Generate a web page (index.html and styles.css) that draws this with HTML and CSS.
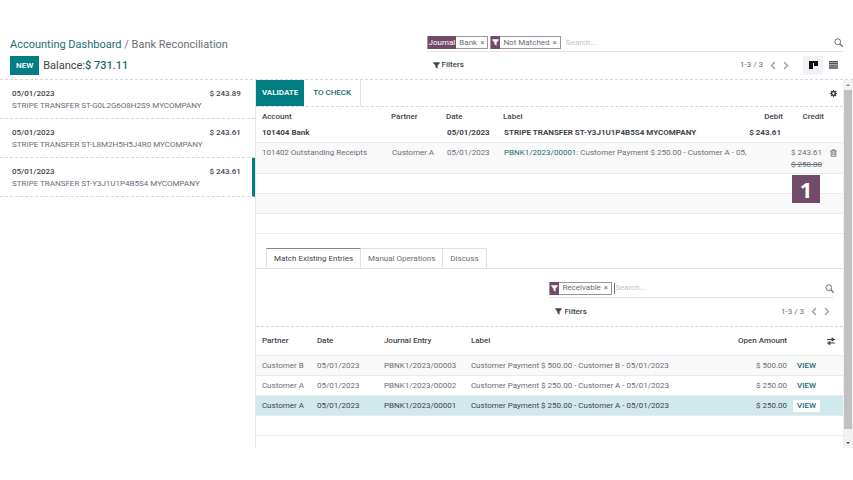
FILE: index.html
```html
<!DOCTYPE html>
<html lang="en">

<head>
  <meta charset="UTF-8">
  <meta name="viewport" content="width=device-width, initial-scale=1">
  <title>Bank Reconciliation</title>
  <link rel="stylesheet" href="styles.css">
</head>

<body>
  <!-- shared icons -->
  <svg class="sprite" aria-hidden="true">
    <symbol id="funnel" viewBox="0 0 12 12">
      <path d="M0.5 0.5h11v1.6L7.8 6v5.5L4.2 9V6L0.5 2.100z" />
    </symbol>
    <symbol id="search" viewBox="0 0 12 12">
      <circle cx="5" cy="5" r="3.900" fill="none" stroke="currentColor" stroke-width="1.300" />
      <path d="M8 8l3.500 3.500" stroke="currentColor" stroke-width="1.700" />
    </symbol>
    <symbol id="prev" viewBox="0 0 8 12">
      <path d="M6.500 1.500L2 6l4.500 4.500" fill="none" stroke="currentColor" stroke-width="2" />
    </symbol>
    <symbol id="next" viewBox="0 0 8 12">
      <path d="M1.500 1.500L6 6l-4.500 4.500" fill="none" stroke="currentColor" stroke-width="2" />
    </symbol>
  </svg>

  <header class="control-panel">
    <div class="panel-left">
      <nav class="breadcrumb">
        <a href="#">Accounting Dashboard</a>
        <span>/</span>
        <span>Bank Reconciliation</span>
      </nav>
      <div class="actions">
        <button class="btn-new">NEW</button>
        <span class="balance">Balance:<b>$ 731.11</b></span>
      </div>
    </div>
    <div class="panel-right">
      <div class="search-bar">
        <span class="facet"><span class="facet-label">Journal</span><span class="facet-value">Bank</span><button
            class="facet-remove" aria-label="Remove Bank">×</button></span>
        <span class="facet"><span class="facet-label"><svg class="ico-funnel"><use href="#funnel" /></svg></span><span
            class="facet-value">Not Matched</span><button class="facet-remove"
            aria-label="Remove Not Matched">×</button></span>
        <input class="search-input" type="text" placeholder="Search..." aria-label="Search">
        <button class="icon-btn" aria-label="Search"><svg class="ico-search"><use href="#search" /></svg></button>
      </div>
      <div class="tools">
        <button class="filters"><svg class="ico-funnel"><use href="#funnel" /></svg>Filters</button>
        <div class="pager">
          <span>1-3 / 3</span>
          <button class="icon-btn" aria-label="Previous"><svg class="ico-arrow"><use href="#prev" /></svg></button>
          <button class="icon-btn" aria-label="Next"><svg class="ico-arrow"><use href="#next" /></svg></button>
        </div>
        <div class="views">
          <button class="view active" aria-label="Kanban view"><svg class="ico-kanban" viewBox="0 0 9 8">
              <path d="M0 0h9v2H0zM0 2h4v6H0zM5 2h4v3H5z" />
            </svg></button>
          <button class="view" aria-label="List view"><svg class="ico-list" viewBox="0 0 9 8">
              <path d="M0 0h9v1.500H0zM0 2.100h9v1.500H0zM0 4.200h9v1.500H0zM0 6.300h9v1.500H0z" />
            </svg></button>
        </div>
      </div>
    </div>
  </header>

  <main class="content">
    <section class="statements">
      <article class="statement">
        <div class="statement-head"><span>05/01/2023</span><span>$ 243.89</span></div>
        <p>STRIPE TRANSFER ST-G0L2G6O8H2S9 MYCOMPANY</p>
      </article>
      <article class="statement">
        <div class="statement-head"><span>05/01/2023</span><span>$ 243.61</span></div>
        <p>STRIPE TRANSFER ST-L8M2H5H5J4R0 MYCOMPANY</p>
      </article>
      <article class="statement selected">
        <div class="statement-head"><span>05/01/2023</span><span>$ 243.61</span></div>
        <p>STRIPE TRANSFER ST-Y3J1U1P4B5S4 MYCOMPANY</p>
      </article>
    </section>

    <section class="reconcile">
      <div class="status-bar">
        <button class="btn-validate">VALIDATE</button>
        <button class="btn-check">TO CHECK</button>
        <button class="icon-btn gear" aria-label="Settings"><svg class="ico-gear" viewBox="0 0 14 14">
            <circle cx="7" cy="7" r="3.800" fill="none" stroke="currentColor" stroke-width="3" />
            <path d="M7 0v3M7 11v3M0 7h3M11 7h3M2 2l2.200 2.200M9.800 9.800L12 12M12 2L9.800 4.200M4.200 9.800L2 12"
              stroke="currentColor" stroke-width="2.400" />
          </svg></button>
      </div>

      <table class="lines">
        <colgroup>
          <col class="c-account">
          <col class="c-partner">
          <col class="c-date">
          <col>
          <col class="c-debit">
          <col class="c-credit">
          <col class="c-trash">
        </colgroup>
        <thead>
          <tr>
            <th>Account</th>
            <th>Partner</th>
            <th>Date</th>
            <th>Label</th>
            <th class="num">Debit</th>
            <th class="num">Credit</th>
            <th></th>
          </tr>
        </thead>
        <tbody>
          <tr class="bank">
            <td>101404 Bank</td>
            <td></td>
            <td>05/01/2023</td>
            <td>STRIPE TRANSFER ST-Y3J1U1P4B5S4 MYCOMPANY</td>
            <td class="num">$ 243.61</td>
            <td></td>
            <td></td>
          </tr>
          <tr class="odd counterpart">
            <td>101402 Outstanding Receipts</td>
            <td>Customer A</td>
            <td>05/01/2023</td>
            <td><a href="#">PBNK1/2023/00001</a>: Customer Payment $ 250.00 - Customer A - 05,</td>
            <td></td>
            <td class="num credit">$ 243.61<s>$ 250.00</s><span class="step">1</span></td>
            <td class="trash"><button class="icon-btn" aria-label="Delete"><svg class="ico-trash" viewBox="0 0 12 13">
                  <path d="M0.500 3h11M4 3V1h4v2M2 3v9h8V3M4.700 5v5M7.300 5v5" fill="none" stroke="currentColor"
                    stroke-width="1.500" />
                </svg></button></td>
          </tr>
          <tr class="empty">
            <td colspan="7"></td>
          </tr>
          <tr class="empty odd">
            <td colspan="7"></td>
          </tr>
          <tr class="empty">
            <td colspan="7"></td>
          </tr>
        </tbody>
      </table>

      <nav class="tabs">
        <button class="tab active">Match Existing Entries</button>
        <button class="tab">Manual Operations</button>
        <button class="tab">Discuss</button>
      </nav>

      <div class="entries-panel">
        <div class="search-bar">
          <span class="facet"><span class="facet-label"><svg class="ico-funnel"><use href="#funnel" /></svg></span><span
              class="facet-value">Receivable</span><button class="facet-remove"
              aria-label="Remove Receivable">×</button></span>
          <input class="search-input focused" type="text" placeholder="Search..." aria-label="Search entries">
          <button class="icon-btn" aria-label="Search"><svg class="ico-search"><use href="#search" /></svg></button>
        </div>
        <div class="tools">
          <button class="filters"><svg class="ico-funnel"><use href="#funnel" /></svg>Filters</button>
          <div class="pager">
            <span>1-3 / 3</span>
            <button class="icon-btn" aria-label="Previous"><svg class="ico-arrow"><use href="#prev" /></svg></button>
            <button class="icon-btn" aria-label="Next"><svg class="ico-arrow"><use href="#next" /></svg></button>
          </div>
        </div>
      </div>

      <table class="entries">
        <colgroup>
          <col class="e-partner">
          <col class="e-date">
          <col class="e-journal">
          <col>
          <col class="e-amount">
          <col class="e-view">
        </colgroup>
        <thead>
          <tr>
            <th>Partner</th>
            <th>Date</th>
            <th>Journal Entry</th>
            <th>Label</th>
            <th class="num">Open Amount</th>
            <th class="options"><button class="icon-btn" aria-label="Columns"><svg class="ico-sliders"
                  viewBox="0 0 8 8">
                  <path d="M0 2.500h8M0 6h8" stroke="currentColor" stroke-width="1" />
                  <path d="M4.500 0.800h2v3.400h-2zM1.500 4.300h2v3.400h-2z" />
                </svg></button></th>
          </tr>
        </thead>
        <tbody>
          <tr class="odd">
            <td>Customer B</td>
            <td>05/01/2023</td>
            <td>PBNK1/2023/00003</td>
            <td>Customer Payment $ 500.00 - Customer B - 05/01/2023</td>
            <td class="num">$ 500.00</td>
            <td class="view-cell"><button class="btn-view">VIEW</button></td>
          </tr>
          <tr>
            <td>Customer A</td>
            <td>05/01/2023</td>
            <td>PBNK1/2023/00002</td>
            <td>Customer Payment $ 250.00 - Customer A - 05/01/2023</td>
            <td class="num">$ 250.00</td>
            <td class="view-cell"><button class="btn-view">VIEW</button></td>
          </tr>
          <tr class="picked">
            <td>Customer A</td>
            <td>05/01/2023</td>
            <td>PBNK1/2023/00001</td>
            <td>Customer Payment $ 250.00 - Customer A - 05/01/2023</td>
            <td class="num">$ 250.00</td>
            <td class="view-cell"><button class="btn-view">VIEW</button></td>
          </tr>
          <tr>
            <td colspan="6"></td>
          </tr>
        </tbody>
      </table>
    </section>

    <div class="scrollbar" aria-hidden="true">
      <span class="arrow up"></span>
      <span class="thumb"></span>
      <span class="arrow down"></span>
    </div>
  </main>
</body>

</html>
```

FILE: styles.css
```css
* {
  box-sizing: border-box;
}

body {
  margin: 0;
  padding: 32px 0;
  min-height: 100vh;
  display: flex;
  flex-direction: column;
  background: #fff;
  color: #6a6e76;
  font: 8px/12px Roboto, "Open Sans", sans-serif;
}

a {
  color: #1a6d72;
  text-decoration: none;
}

p {
  margin: 0;
}

button,
input {
  font: inherit;
  color: inherit;
  background: none;
  border: 0;
  border-radius: 0;
  padding: 0;
  margin: 0;
}

svg {
  display: block;
  fill: currentColor;
}

.sprite {
  position: absolute;
  width: 0;
  height: 0;
}

.ico-funnel {
  width: 7px;
  height: 7px;
}

.ico-search {
  width: 9px;
  height: 9px;
}

.ico-arrow {
  width: 6px;
  height: 9px;
}

.ico-kanban,
.ico-list {
  width: 9px;
  height: 8px;
}

.ico-gear {
  width: 7px;
  height: 7px;
}

.ico-trash {
  width: 7px;
  height: 8px;
}

.ico-sliders {
  width: 8px;
  height: 8px;
}

/* top bar */
.control-panel {
  display: grid;
  grid-template-columns: 1fr 1fr;
  padding: 0 10px;
  height: 48px;
  border-bottom: 1px dashed #d5d8db;
}

.control-panel,
.content {
  width: 100%;
}

.breadcrumb {
  padding-top: 5px;
  font-size: 11px;
  line-height: 16px;
}

.actions {
  display: flex;
  align-items: center;
  gap: 4px;
  padding-top: 3px;
}

.btn-new {
  height: 19px;
  padding: 0 6px;
  background: #017e84;
  color: #fff;
  font-weight: 600;
}

.balance {
  color: #3f444b;
  font-size: 11px;
  line-height: 16px;
}

.balance b {
  color: #1a6d72;
  font-weight: 500;
}

.search-bar {
  display: flex;
  align-items: center;
  gap: 2px;
  height: 18px;
  border-bottom: 1px solid #e3e5e8;
}

.panel-right .search-bar {
  margin-top: 2px;
}

.facet {
  display: flex;
  align-items: center;
  height: 13px;
  border: 1px solid #a58fa1;
}

.facet-label {
  display: flex;
  align-items: center;
  height: 13px;
  padding: 0 1px;
  background: #714b67;
  color: #fff;
}

.facet-value {
  padding-left: 3px;
}

.facet-remove {
  padding: 0 3px;
}

.search-input {
  flex: 1;
  min-width: 0;
  padding: 0 3px;
  outline: 0;
}

.search-input::placeholder {
  color: #c2c5ca;
  opacity: 1;
}

/* caret of the active search box */
.search-input.focused {
  height: 11px;
  padding-left: 0;
  border-left: 1px solid #6a6e76;
}

.tools {
  display: flex;
  align-items: center;
}

.panel-right .tools {
  height: 26px;
  padding-left: 6px;
}

.filters {
  display: flex;
  align-items: center;
  gap: 2px;
  margin-right: auto;
  color: #3f444b;
  font-weight: 500;
}

.pager {
  display: flex;
  align-items: center;
  gap: 7px;
}

.pager .icon-btn {
  color: #a3a7ad;
}

.views {
  display: flex;
  padding-left: 14px;
}

.view {
  display: grid;
  place-items: center;
  width: 20px;
  height: 19px;
  color: #4a4f59;
}

.view.active {
  background: #f1f1f6;
  color: #111;
}

/* body */
.content {
  display: flex;
  flex: 1;
}

.statements {
  width: 30%;
  border-right: 1px solid #e6e8ea;
}

.statement {
  height: 39px;
  padding: 8px 14px 0 12px;
  border-bottom: 1px dashed #d5d8db;
}

.statement.selected {
  padding-right: 11px;
  border-right: 3px solid #017e84;
}

.statement-head {
  display: flex;
  justify-content: space-between;
  color: #3f444b;
  font-weight: 500;
}

.reconcile {
  flex: 1;
  min-width: 0;
}

.status-bar {
  display: flex;
  height: 27px;
  border-bottom: 1px dashed #d5d8db;
}

.status-bar .btn-validate {
  padding: 0 6px;
  background: #017e84;
  color: #fff;
  font-weight: 600;
}

.status-bar .btn-check {
  padding: 0 9px;
  border-right: 1px solid #dee0e3;
  color: #1a6d72;
  font-weight: 500;
}

.gear {
  margin-left: auto;
  padding: 0 6px;
  color: #3f444b;
}

table {
  width: 100%;
  border-collapse: collapse;
  table-layout: fixed;
}

th,
td {
  padding: 1px 6px 0;
  text-align: left;
  white-space: nowrap;
}

th {
  color: #3f444b;
  font-weight: 500;
}

.lines .num,
.entries .num {
  padding-left: 0;
  text-align: right;
}

tbody tr {
  height: 20px;
  border-bottom: 1px solid #e8eaec;
}

.odd {
  background: #f9f9fa;
}

.c-account {
  width: 22%;
}

.c-partner {
  width: 55px;
}

.c-date {
  width: 57px;
}

.c-debit {
  width: 46px;
}

.c-credit {
  width: 41px;
}

.c-trash {
  width: 13px;
}

.lines td {
  padding-left: 7px;
  padding-right: 8px;
}

.lines td:first-child {
  padding-left: 6px;
}

.lines thead tr {
  height: 18px;
}

.lines .bank {
  height: 17px;
  color: #3f444b;
  font-weight: 700;
}

.lines .bank td {
  padding-bottom: 2px;
}

.lines .counterpart {
  height: 31px;
  vertical-align: top;
}

.lines .counterpart td {
  padding-top: 4px;
}

.lines .credit {
  position: relative;
}

.credit s {
  display: block;
}

/* numbered marker over the table */
.step {
  position: absolute;
  top: 32px;
  right: 10px;
  z-index: 1;
  width: 28px;
  height: 28px;
  background: #714b67;
  color: #fff;
  font-family: "Open Sans", sans-serif;
  font-size: 22px;
  font-weight: 700;
  line-height: 28px;
  text-align: center;
}

.lines .trash {
  padding-left: 0;
  padding-right: 0;
}

.trash .icon-btn {
  padding-top: 2px;
}

.tabs {
  display: flex;
  padding: 14px 10px 0;
  border-bottom: 1px solid #dfe1e4;
}

.tab {
  height: 20px;
  padding: 2px 7px 0;
  border: 1px solid #dfe1e4;
  border-left: 0;
  border-bottom: 0;
}

.tab.active {
  border-left: 1px solid #dfe1e4;
  border-top-color: #8f7d93;
  color: #3f444b;
}

.entries-panel {
  padding: 11px 9px 0 50%;
  height: 58px;
  border-bottom: 1px dashed #d5d8db;
}

.entries-panel .tools {
  height: 28px;
  padding: 0 4px 0 6px;
}

.entries thead tr {
  height: 29px;
  border-bottom: 1px solid #e8eaec;
}

.e-partner {
  width: 55px;
}

.e-date {
  width: 67px;
}

.e-journal {
  width: 87px;
}

.e-amount {
  width: 80px;
}

.e-view {
  width: 50px;
}

.entries .options {
  padding-right: 8px;
}

.options .icon-btn {
  display: block;
  margin-left: auto;
}

.entries .picked {
  background: #cfe9ec;
  color: #3f444b;
}

.entries .view-cell {
  padding-left: 0;
}

.btn-view {
  display: block;
  height: 12px;
  padding: 0 4px;
  color: #1a6d72;
  font-weight: 500;
}

.picked .btn-view {
  background: #fff;
}

.scrollbar {
  display: flex;
  flex-direction: column;
  align-items: center;
  gap: 4px;
  width: 10px;
  padding: 4px 0;
  background: #f1f1f1;
}

.thumb {
  flex: 1;
  width: 8px;
  margin-bottom: 9px;
  background: #c1c1c1;
}

.arrow {
  border: 2px solid transparent;
}

.arrow.up {
  border-top: 0;
  border-bottom-color: #8a8a8a;
}

.arrow.down {
  border-bottom: 0;
  border-top-color: #505050;
}
```
